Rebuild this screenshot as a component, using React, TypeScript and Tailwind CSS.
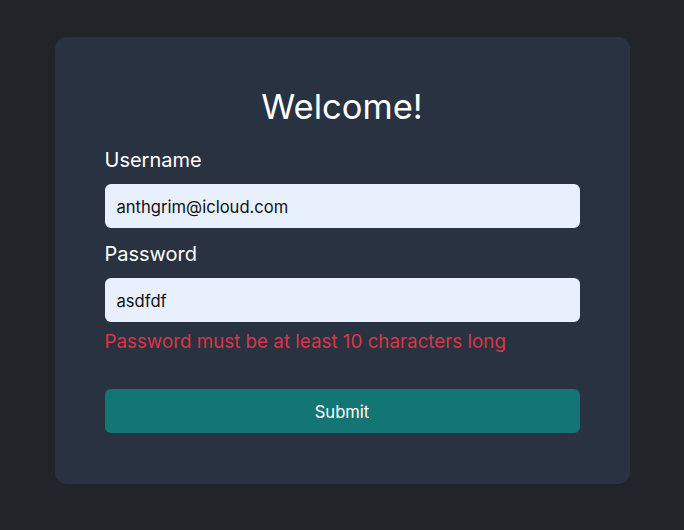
export default function App() {
  return (
    <div
      className="min-h-screen bg-[#212429] pt-[37px] pb-[47px] flex justify-center"
      style={{ fontFamily: 'Inter, "Noto Sans", sans-serif' }}
    >
      <div className="w-[575px] h-[447px] rounded-xl bg-[#283241] px-[50px] pt-[50px]">
        <h1 className="text-center text-[34.5px] leading-10 text-white">Welcome!</h1>
        <form className="flex flex-col mt-[19px]" onSubmit={(e) => e.preventDefault()}>
          <label className="text-xl leading-7 text-white">Username</label>
          <input
            className="mt-[10px] h-11 w-full rounded-md bg-[#e8f0fe] px-3 pt-[2px] text-[16.6px] text-[#111111] outline-none"
            defaultValue="anthgrim@icloud.com"
          />
          <label className="mt-3 text-xl leading-7 text-white">Password</label>
          <input
            className="mt-[10px] h-11 w-full rounded-md bg-[#e8f0fe] px-3 pt-[2px] text-[16.6px] text-[#111111] outline-none"
            defaultValue="asdfdf"
          />
          <p className="mt-[6px] text-[18.8px] leading-7 text-[#dc3545]">
            Password must be at least 10 characters long
          </p>
          <button
            type="submit"
            className="mt-[33px] h-11 w-full rounded-md bg-[#137574] pt-[2px] text-[16.6px] text-white"
          >
            Submit
          </button>
        </form>
      </div>
    </div>
  );
}
